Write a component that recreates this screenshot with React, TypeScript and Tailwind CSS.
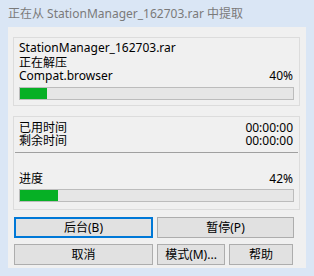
import React from "react";

const font = { fontFamily: '"Noto Sans", "Noto Sans CJK SC", sans-serif' };

function Bar({ pct }: { pct: number }) {
  return (
    <div className="h-[13px] w-full border border-[#bcbcbc] bg-[#e6e6e6]">
      <div className="h-full bg-[#06b025]" style={{ width: `${pct}%` }} />
    </div>
  );
}

function Btn({ children, w, focus }: { children: React.ReactNode; w: string; focus?: boolean }) {
  return (
    <div
      className={`flex h-[21px] items-center justify-center bg-[#e1e1e1] text-[12px] leading-none text-black ${
        focus ? "border-2 border-[#0078d7]" : "border border-[#adadad]"
      } ${w}`}
    >
      {children}
    </div>
  );
}

export default function App() {
  return (
    <div className="flex h-[276px] w-[314px] flex-col bg-[#dae6f5]" style={font}>
      <div className="flex h-[27px] items-center pl-[8px] text-[12px] text-[#7a7a7a]">
        正在从 StationManager_162703.rar 中提取
      </div>
      <div className="mx-[8px] flex h-[241px] flex-col bg-[#f0f0f0] px-[5px] pt-[10px]">
        <div className="flex w-[287px] flex-col border border-[#dcdcdc] px-[5px] pb-[5px] pt-[3px] text-[12px] leading-[14px] text-black">
          <div>StationManager_162703.rar</div>
          <div className="mt-[1px]">正在解压</div>
          <div className="-mt-[1px] flex justify-between pr-[1px]">
            <span>Compat.browser</span>
            <span>40%</span>
          </div>
          <div className="mt-[4px]">
            <Bar pct={10} />
          </div>
        </div>
        <div className="mt-[10px] flex w-[287px] flex-col border border-[#dcdcdc] px-[5px] pb-[7px] pt-[4px] text-[12px] leading-[13px] text-black">
          <div className="flex justify-between pr-[1px]">
            <span>已用时间</span>
            <span>00:00:00</span>
          </div>
          <div className="flex justify-between pr-[1px]">
            <span>剩余时间</span>
            <span>00:00:00</span>
          </div>
          <div className="-mx-[4px] mt-[5px] h-[1px] bg-[#a0a0a0]" />
          <div className="mt-[19px] flex justify-between pr-[1px]">
            <span>进度</span>
            <span>42%</span>
          </div>
          <div className="mt-[4px]">
            <Bar pct={14} />
          </div>
        </div>
        <div className="mt-[7px] flex flex-col gap-[6px] pl-[1px]">
          <div className="flex gap-[4px]">
            <Btn w="w-[139px]" focus>
              后台(B)
            </Btn>
            <Btn w="w-[137px]">暂停(P)</Btn>
          </div>
          <div className="flex gap-[4px]">
            <Btn w="w-[139px]">取消</Btn>
            <Btn w="w-[68px]">模式(M)...</Btn>
            <Btn w="w-[64px]">帮助</Btn>
          </div>
        </div>
      </div>
    </div>
  );
}
